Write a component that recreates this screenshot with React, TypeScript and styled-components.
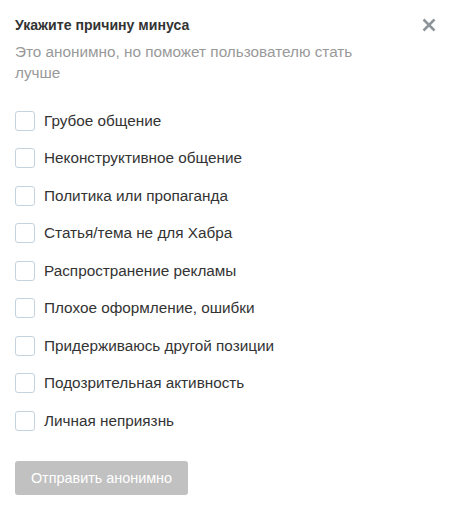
import React from "react";
import styled, { createGlobalStyle } from "styled-components";

const Global = createGlobalStyle`
  html, body { margin: 0; padding: 0; background: #fff; }
  body { font-family: "Liberation Sans", Arial, sans-serif; }
`;

const Modal = styled.div`
  width: 451px;
  box-sizing: border-box;
  padding: 15px 15px 14px 15px;
`;

const Header = styled.div`
  display: flex;
  justify-content: space-between;
  align-items: flex-start;
`;

const Title = styled.h2`
  margin: 0;
  font-size: 14.1px;
  line-height: 20px;
  font-weight: 700;
  color: #333;
`;

const Close = styled.button`
  border: 0;
  background: none;
  padding: 0;
  margin: 3px 0 0 0;
  width: 14px;
  height: 14px;
  display: flex;
  cursor: pointer;
`;

const Subtitle = styled.p`
  margin: 6px 0 0 0;
  width: 360px;
  font-size: 15.3px;
  line-height: 21px;
  color: #999;
`;

const List = styled.div`
  margin-top: 19px;
  display: flex;
  flex-direction: column;
`;

const Row = styled.label`
  display: flex;
  align-items: center;
  height: 37.5px;
  gap: 9px;
  font-size: 15.3px;
  color: #333;
  cursor: pointer;
`;

const Box = styled.span`
  width: 20px;
  height: 20px;
  box-sizing: border-box;
  border: 1px solid #c5d3de;
  border-radius: 3px;
  flex: none;
`;

const Submit = styled.button`
  margin-top: 21px;
  height: 34px;
  width: 173px;
  border: 0;
  border-radius: 3px;
  background: #c1c1c1;
  color: #fff;
  font-family: "Liberation Sans", Arial, sans-serif;
  font-size: 14.4px;
  padding: 0;
`;

const reasons = [
  "Грубое общение",
  "Неконструктивное общение",
  "Политика или пропаганда",
  "Статья/тема не для Хабра",
  "Распространение рекламы",
  "Плохое оформление, ошибки",
  "Придерживаюсь другой позиции",
  "Подозрительная активность",
  "Личная неприязнь",
];

export default function App() {
  return (
    <>
      <Global />
      <Modal>
        <Header>
          <Title>Укажите причину минуса</Title>
          <Close aria-label="Закрыть">
            <svg width="14" height="14" viewBox="0 0 14 14">
              <path d="M1.5 1.5 L12.5 12.5 M12.5 1.5 L1.5 12.5" stroke="#8d949a" strokeWidth="2.5" strokeLinecap="butt" />
            </svg>
          </Close>
        </Header>
        <Subtitle>Это анонимно, но поможет пользователю стать лучше</Subtitle>
        <List>
          {reasons.map((r) => (
            <Row key={r}>
              <Box />
              {r}
            </Row>
          ))}
        </List>
        <Submit disabled>Отправить анонимно</Submit>
      </Modal>
    </>
  );
}
